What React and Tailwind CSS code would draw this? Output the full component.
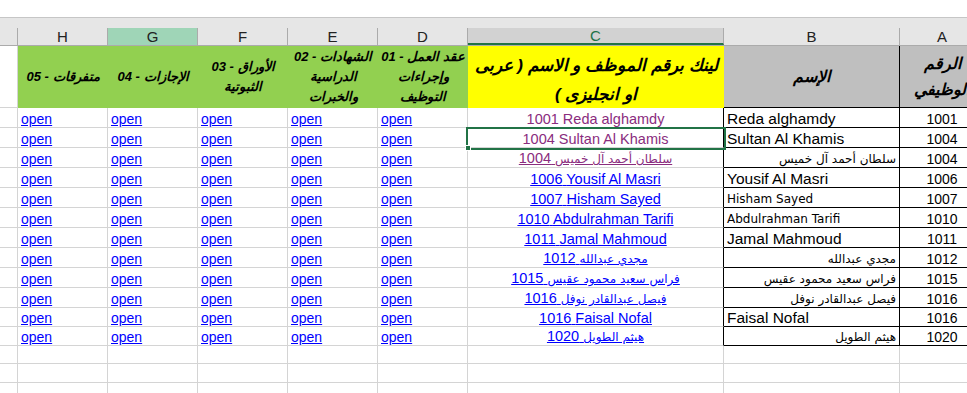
import React from "react";

const GRID = "border-[#d4d4d4]";

const rows = [
  { n: "1001", c: "Reda alghamdy", visited: true, u: false, b: "Reda alghamdy", bt: "en", h: 20 },
  { n: "1004", c: "Sultan Al Khamis", visited: true, u: false, b: "Sultan Al Khamis", bt: "en", h: 20 },
  { n: "1004", c: "سلطان أحمد آل خميس", ar: true, visited: true, u: true, b: "سلطان أحمد آل خميس", bt: "ar", h: 20 },
  { n: "1006", c: "Yousif Al Masri", b: "Yousif Al Masri", bt: "en", h: 20 },
  { n: "1007", c: "Hisham Sayed", b: "Hisham Sayed", bt: "sm", h: 20 },
  { n: "1010", c: "Abdulrahman Tarifi", b: "Abdulrahman Tarifi", bt: "sm", h: 20 },
  { n: "1011", c: "Jamal Mahmoud", b: "Jamal Mahmoud", bt: "en", h: 20 },
  { n: "1012", c: "مجدي عبدالله", ar: true, b: "مجدي عبدالله", bt: "ar", h: 20 },
  { n: "1015", c: "فراس سعيد محمود عقيس", ar: true, b: "فراس سعيد محمود عقيس", bt: "ar", h: 20 },
  { n: "1016", c: "فيصل عبدالقادر نوفل", ar: true, b: "فيصل عبدالقادر نوفل", bt: "ar", h: 20 },
  { n: "1016", c: "Faisal Nofal", b: "Faisal Nofal", bt: "en", h: 19 },
  { n: "1020", c: "هيثم الطويل", ar: true, b: "هيثم الطويل", bt: "ar", h: 19 },
];

const HCLS = { 20: "h-[20px]", 19: "h-[19px]", 18: "h-[18px]" };

function OpenCell() {
  return (
    <div className={`w-[90px] shrink-0 border-r border-b ${GRID} flex items-end pl-[3px]`}>
      <span className="text-[14px] leading-[16px] text-[#0000ff] underline font-['Liberation_Sans',Arial,sans-serif]">open</span>
    </div>
  );
}

function HeaderText({ lines, size = "text-[13px]", lh = "leading-[20px]" }) {
  return (
    <div dir="rtl" className={`flex flex-col items-center ${size} ${lh} font-bold italic text-black font-['Liberation_Sans','DejaVu_Sans',sans-serif]`}>
      {lines.map((l, i) => (
        <span key={i} className="whitespace-nowrap">{l}</span>
      ))}
    </div>
  );
}

export default function App() {
  return (
    <div className="w-[967px] h-[393px] overflow-hidden bg-white relative font-['Liberation_Sans',Arial,sans-serif]">
      <div className="w-[984px]">
        {/* top strip */}
        <div className="h-[18px] bg-white border-b border-[#c6c6c6]" />
        <div className="h-[10px] bg-[#e6e6e6]" />
        {/* column letters */}
        <div className="flex h-[18px] bg-[#e6e6e6] border-b border-[#ababab] text-[15px] leading-[17px] text-[#222]">
          <div className="w-[18px] shrink-0 border-r border-[#ababab]" />
          {["H", "G", "F", "E", "D"].map((l) => (
            <div
              key={l}
              className={`w-[90px] shrink-0 border-r border-[#ababab] flex items-center justify-center ${l === "G" ? "bg-[#9fd5b7]" : ""}`}
            >
              {l}
            </div>
          ))}
          <div className="w-[256px] shrink-0 border-r border-[#ababab] bg-[#d2d2d2] border-b-2 border-b-[#217346] flex items-center justify-center text-[#217346]">
            C
          </div>
          <div className="w-[176px] shrink-0 border-r border-[#ababab] flex items-center justify-center">B</div>
          <div className="w-[84px] shrink-0 flex items-center justify-center">A</div>
        </div>

        {/* header row */}
        <div className="flex h-[62px]">
          <div className={`w-[18px] shrink-0 border-r border-b ${GRID}`} />
          <div className="w-[90px] shrink-0 bg-[#92d050] flex items-center justify-center">
            <HeaderText lines={["متفرقات - 05"]} />
          </div>
          <div className="w-[90px] shrink-0 bg-[#92d050] flex items-center justify-center">
            <HeaderText lines={["الإجازات - 04"]} />
          </div>
          <div className="w-[90px] shrink-0 bg-[#92d050] flex items-center justify-center">
            <HeaderText lines={["الأوراق - 03", "الثبوتية"]} />
          </div>
          <div className="w-[90px] shrink-0 bg-[#92d050] flex items-center justify-center">
            <HeaderText lines={["الشهادات - 02", "الدراسية", "والخبرات"]} />
          </div>
          <div className="w-[90px] shrink-0 bg-[#92d050] flex items-center justify-center">
            <HeaderText lines={["عقد العمل - 01", "وإجراءات", "التوظيف"]} />
          </div>
          <div className="w-[256px] shrink-0 bg-[#ffff00] flex items-center justify-center pt-[5px]">
            <HeaderText
              lines={["لينك برقم الموظف و الاسم ( عربى", "او انجليزى )"]}
              size="text-[17px]"
              lh="leading-[29px]"
            />
          </div>
          <div className="w-[176px] shrink-0 bg-[#bfbfbf] border-r border-b border-black flex items-center justify-center">
            <HeaderText lines={["الإسم"]} size="text-[16px]" />
          </div>
          <div className="w-[84px] shrink-0 bg-[#bfbfbf] border-b border-black flex items-center justify-center">
            <HeaderText lines={["الرقم", "الوظيفي"]} size="text-[16px]" lh="leading-[26px]" />
          </div>
        </div>

        {/* data rows */}
        {rows.map((r, i) => (
          <div key={i} className={`flex ${HCLS[r.h]}`}>
            <div className={`w-[18px] shrink-0 border-r border-b ${GRID}`} />
            <OpenCell />
            <OpenCell />
            <OpenCell />
            <OpenCell />
            <OpenCell />
            <div className={`w-[256px] shrink-0 border-b ${GRID} border-r border-r-black flex items-end justify-center`}>
              <span
                className={`leading-[16px] whitespace-nowrap font-['Liberation_Sans','DejaVu_Sans',sans-serif] ${
                  r.visited ? "text-[#8a2c7e]" : "text-[#0000ff]"
                } ${r.visited && !r.u ? "" : "underline"}`}
              >
                <span className="text-[14.5px]">{r.n} </span>
                {r.ar ? (
                  <span className="text-[12px] font-['DejaVu_Sans',sans-serif]">{r.c}</span>
                ) : (
                  <span className="text-[14.5px]">{r.c}</span>
                )}
              </span>
            </div>
            <div
              className={`w-[176px] shrink-0 border-r border-b border-black flex items-end px-[3px] ${
                r.bt === "ar" ? "justify-end" : "justify-start"
              }`}
            >
              {r.bt === "en" && (
                <span className="text-[15.5px] leading-[16px] whitespace-nowrap text-black">{r.b}</span>
              )}
              {r.bt === "sm" && (
                <span className="text-[12px] leading-[16px] whitespace-nowrap text-black font-['DejaVu_Sans',sans-serif]">
                  {r.b}
                </span>
              )}
              {r.bt === "ar" && (
                <span dir="rtl" className="text-[12px] leading-[16px] whitespace-nowrap text-black font-['DejaVu_Sans',sans-serif]">
                  {r.b}
                </span>
              )}
            </div>
            <div className="w-[84px] shrink-0 border-b border-black flex items-end justify-center">
              <span className="text-[14px] leading-[16px] text-black">{r.n}</span>
            </div>
          </div>
        ))}

        {/* empty rows */}
        {["h-[18px]", "h-[19px]", "h-[19px]"].map((h, i) => (
          <div key={i} className={`flex ${h}`}>
            <div className={`w-[18px] shrink-0 border-r border-b ${GRID}`} />
            {[0, 1, 2, 3, 4].map((k) => (
              <div key={k} className={`w-[90px] shrink-0 border-r border-b ${GRID}`} />
            ))}
            <div className={`w-[256px] shrink-0 border-r border-b ${GRID}`} />
            <div className={`w-[176px] shrink-0 border-r border-b ${GRID}`} />
            <div className={`w-[84px] shrink-0 border-b ${GRID}`} />
          </div>
        ))}
      </div>

      {/* selection box */}
      <div className="absolute left-[466px] top-[127px] w-[260px] h-[23px] border-2 border-[#217346] pointer-events-none" />
      <div className="absolute left-[465px] top-[145px] w-[6px] h-[6px] bg-[#217346] border border-white" />
    </div>
  );
}
